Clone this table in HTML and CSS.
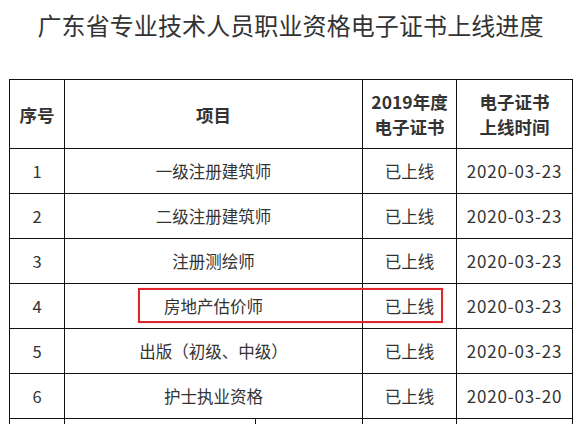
FILE: index.html
```html
<!DOCTYPE html>
<html lang="zh-CN">
<head>
<meta charset="utf-8">
<title>广东省专业技术人员职业资格电子证书上线进度</title>
<link rel="stylesheet" href="styles.css">
</head>
<body>
<div class="page">
  <h1 class="title">广东省专业技术人员职业资格电子证书上线进度</h1>
  <table class="progress">
    <colgroup>
      <col class="c-no">
      <col class="c-item-a">
      <col class="c-item-b">
      <col class="c-cert">
      <col class="c-date">
    </colgroup>
    <thead>
      <tr class="head">
        <th>序号</th>
        <th colspan="2">项目</th>
        <th>2019年度<br>电子证书</th>
        <th>电子证书<br>上线时间</th>
      </tr>
    </thead>
    <tbody>
      <tr><td>1</td><td colspan="2">一级注册建筑师</td><td>已上线</td><td class="date">2020-03-23</td></tr>
      <tr><td>2</td><td colspan="2">二级注册建筑师</td><td>已上线</td><td class="date">2020-03-23</td></tr>
      <tr><td>3</td><td colspan="2">注册测绘师</td><td>已上线</td><td class="date">2020-03-23</td></tr>
      <tr><td>4</td><td colspan="2" class="marked">房地产估价师<span class="highlight"></span></td><td>已上线</td><td class="date">2020-03-23</td></tr>
      <tr><td>5</td><td colspan="2">出版（初级、中级）</td><td>已上线</td><td class="date">2020-03-23</td></tr>
      <tr><td>6</td><td colspan="2">护士执业资格</td><td>已上线</td><td class="date">2020-03-20</td></tr>
      <tr class="tail"><td></td><td></td><td></td><td></td><td></td></tr>
    </tbody>
  </table>
</div>
</body>
</html>
```

FILE: styles.css
```css
html, body {
  margin: 0;
  padding: 0;
  background: #fff;
}

body {
  font-family: "Noto Sans CJK SC", "Noto Sans", sans-serif;
  color: #333;
}

.page {
  padding: 0 5px 0 9px;
}

.title {
  margin: 7px 0 36px;
  font-size: 24px;
  line-height: 36px;
  font-weight: normal;
  text-align: center;
  color: #333;
  letter-spacing: 0.1px;
}

.progress {
  width: 563px;
  table-layout: fixed;
  border-collapse: collapse;
  font-size: 16.5px;
}

.c-no { width: 55px; }
.c-item-a { width: 191px; }
.c-item-b { width: 107px; }
.c-cert { width: 94px; }
.c-date { width: 116px; }

.progress th,
.progress td {
  border: 1px solid #111;
  text-align: center;
  vertical-align: middle;
  padding: 0;
  line-height: 24px;
}

.progress th {
  height: 68px;
  font-size: 17.5px;
  line-height: 25px;
  font-weight: bold;
  color: #333;
}

.progress td {
  height: 44px;
}

.progress td.date {
  letter-spacing: 0.8px;
  font-size: 17px;
}

.progress td.marked {
  position: relative;
}

.highlight {
  position: absolute;
  left: 73px;
  top: 4px;
  width: 301px;
  height: 31px;
  border: 2px solid #e2252b;
  box-shadow: 0 0 1px rgba(226, 37, 43, 0.5);
  pointer-events: none;
}
```
